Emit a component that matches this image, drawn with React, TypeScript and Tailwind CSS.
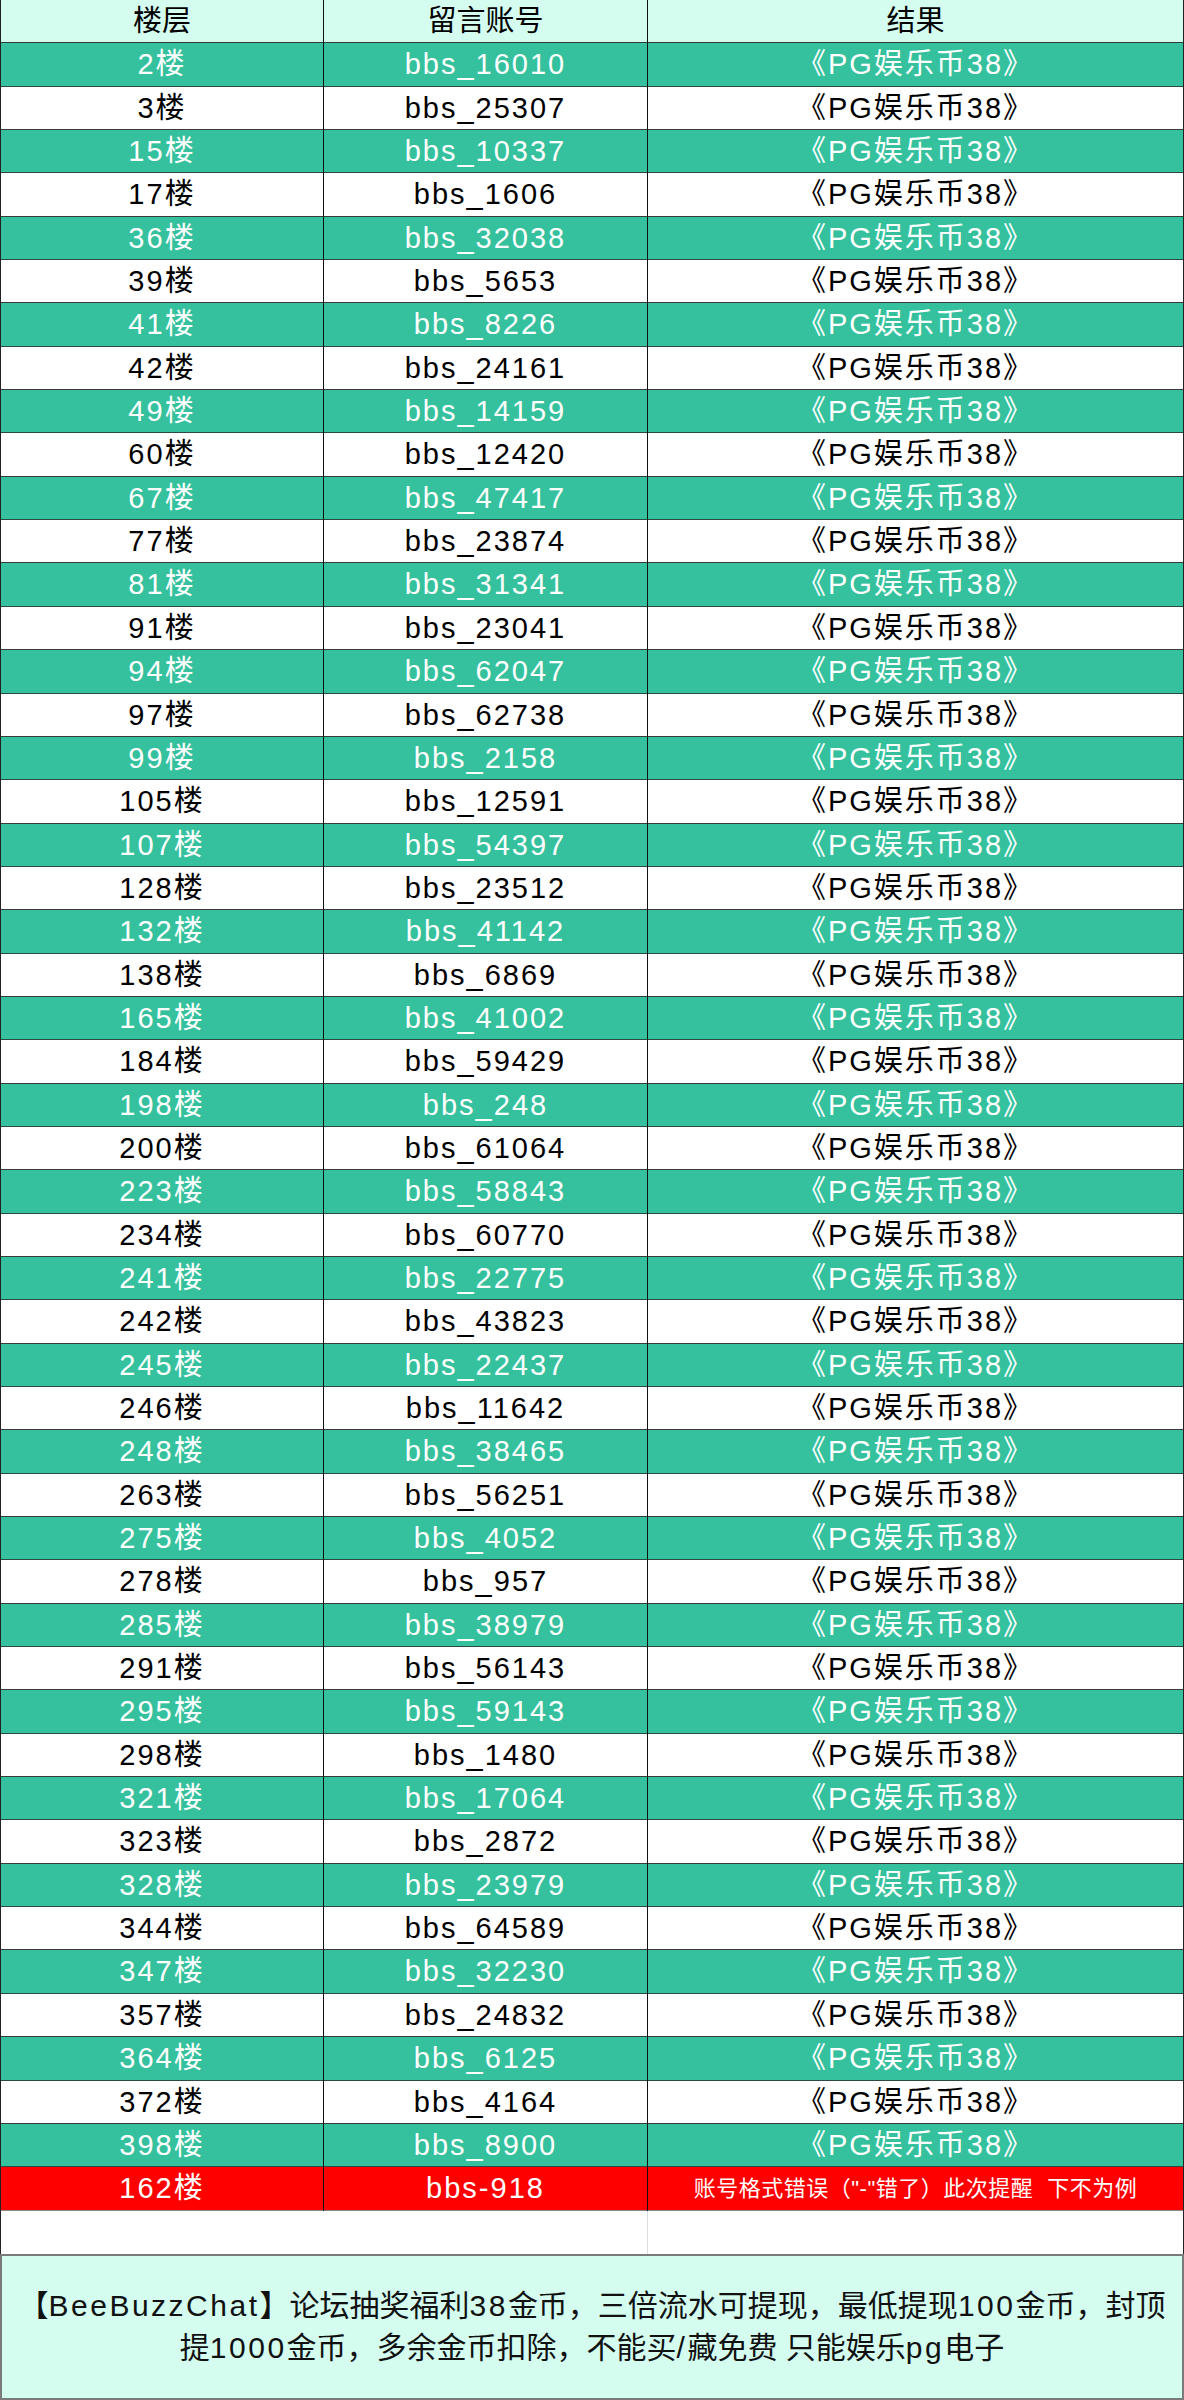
import React from "react";

const rows: [number, string][] = [
  [2, "16010"], [3, "25307"], [15, "10337"], [17, "1606"], [36, "32038"],
  [39, "5653"], [41, "8226"], [42, "24161"], [49, "14159"], [60, "12420"],
  [67, "47417"], [77, "23874"], [81, "31341"], [91, "23041"], [94, "62047"],
  [97, "62738"], [99, "2158"], [105, "12591"], [107, "54397"], [128, "23512"],
  [132, "41142"], [138, "6869"], [165, "41002"], [184, "59429"], [198, "248"],
  [200, "61064"], [223, "58843"], [234, "60770"], [241, "22775"], [242, "43823"],
  [245, "22437"], [246, "11642"], [248, "38465"], [263, "56251"], [275, "4052"],
  [278, "957"], [285, "38979"], [291, "56143"], [295, "59143"], [298, "1480"],
  [321, "17064"], [323, "2872"], [328, "23979"], [344, "64589"], [347, "32230"],
  [357, "24832"], [364, "6125"], [372, "4164"], [398, "8900"],
];

function Lat({ text }: { text: string }) {
  const parts = text.split(/([\x21-\x7e]+)/);
  return (
    <>
      {parts.map((p, i) =>
        /^[\x21-\x7e]+$/.test(p) ? (
          <span key={i} className="tracking-[2.5px]">
            {p}
          </span>
        ) : (
          <React.Fragment key={i}>{p}</React.Fragment>
        )
      )}
    </>
  );
}

export default function App() {
  return (
    <div className="w-[1184px] bg-white font-['Liberation_Sans','Noto_Sans_CJK_SC',sans-serif] text-black">
      <div className="border-x border-[#222]">
        {/* header */}
        <div className="grid h-[43.35px] grid-cols-[323px_324px_1fr] border-b border-[#2d3d38] bg-[#d4fdf0] text-[29px]">
          <div className="flex items-center justify-center border-r border-[#111]">楼层</div>
          <div className="flex items-center justify-center border-r border-[#111]">留言账号</div>
          <div className="flex items-center justify-center">结果</div>
        </div>
        {rows.map(([floor, acc], i) => {
          const green = i % 2 === 0;
          return (
            <div
              key={floor}
              className={
                "grid h-[43.35px] grid-cols-[323px_324px_1fr] border-b text-[29px] tracking-[2px] " +
                (green
                  ? "border-[#2d4a42] bg-[#35c19d] text-white"
                  : "border-[#3a3a3a] bg-white text-black")
              }
            >
              <div className="flex items-center justify-center border-r border-[#111]">{floor}楼</div>
              <div className="flex items-center justify-center border-r border-[#111]">bbs_{acc}</div>
              <div className="flex items-center justify-center">《PG娱乐币38》</div>
            </div>
          );
        })}
        {/* red row */}
        <div className="grid h-[43.35px] grid-cols-[323px_324px_1fr] border-b border-[#8a8a8a] bg-[#ff0000] text-white">
          <div className="flex items-center justify-center border-r border-[#111] text-[29px] tracking-[2px]">162楼</div>
          <div className="flex items-center justify-center border-r border-[#111] text-[29px] tracking-[2px]">bbs-918</div>
          <div className="flex items-center justify-center text-[22px] tracking-[0.5px]">
            <span>账号格式错误（"-"错了）此次提醒</span>
            <span className="ml-[14px]">下不为例</span>
          </div>
        </div>
        {/* empty row */}
        <div className="grid h-[43.35px] grid-cols-[647px_1fr] bg-white">
          <div className="border-r border-[#dddddd]" />
          <div />
        </div>
      </div>
      {/* footer */}
      <div className="flex h-[146px] items-center justify-center border-2 border-[#7a7a7a] bg-[#d4fdf0] text-center text-[30px] leading-[42px] text-[#111]">
        <p>
          <Lat text="【BeeBuzzChat】论坛抽奖福利38金币，三倍流水可提现，最低提现100金币，封顶" />
          <br />
          <Lat text="提1000金币，多余金币扣除，不能买/藏免费 只能娱乐pg电子" />
        </p>
      </div>
    </div>
  );
}
